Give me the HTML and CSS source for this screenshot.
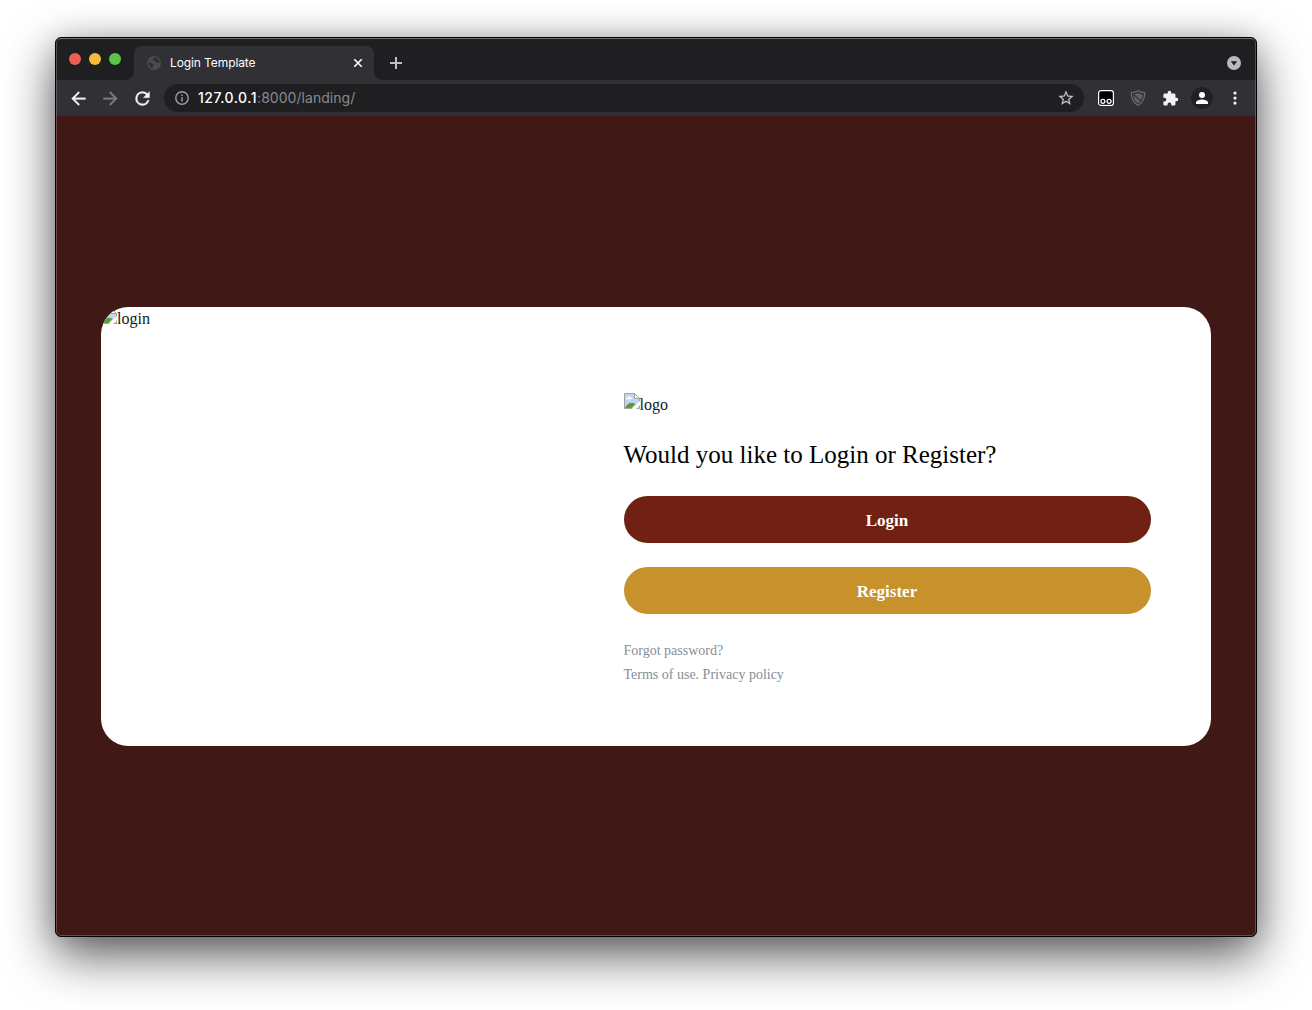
FILE: index.html
```html
<!DOCTYPE html>
<html lang="en">
<head>
<meta charset="utf-8">
<title>Login Template</title>
<link rel="stylesheet" href="styles.css">
</head>
<body>
<svg class="defs" width="0" height="0" aria-hidden="true">
  <symbol id="broken" viewBox="0 0 16 16">
    <path d="M.5.5h10l5 5v10H.5z" fill="#c3d5f7" stroke="#a3a3a3"/>
    <path d="M2 6.200c0-1.500 1.400-1.800 1.800-1.600.4-1.600 3-1.500 3.200 0 1.400 0 1.600 1.600.6 1.600z" fill="#fff"/>
    <path d="M1 15c1.500-4 5-6 8.500-5l2 1L7.500 15z" fill="#5c9e32"/>
    <path d="M10.500.5v5h5z" fill="#f3f3f3" stroke="#a3a3a3"/>
    <path d="M16 7.800 7.800 16h4.200L16 12z" fill="#fff"/>
  </symbol>
</svg>
<div class="window">
  <div class="tabstrip">
    <div class="lights"><i class="red"></i><i class="yellow"></i><i class="green"></i></div>
    <div class="tab">
      <svg class="globe" width="14" height="14" viewBox="0 0 14 14"><circle cx="7" cy="7" r="7" fill="#4a4b4e"/><path d="M1.300 6.200c2 .2 2.800.3 4 1.600 1.200.2 1.800.5 1.500 1.700-.8.600-1 1.500-1.200 2.800-2.600-.8-4.500-3.200-4.300-6.100zM8.800 1.600c-1.800.2-2.700.8-2.800 1.800.1 1.200 1.400.9 1.900 2 .3 1.100 1.500.8 2.200 1.200.8.6 1.500.4 2.500.1-.1-2.500-1.500-4.300-3.800-5.100z" fill="#303035"/></svg>
      <span class="tab-title">Login Template</span>
      <svg width="10" height="10" viewBox="0 0 10 10"><path d="m1.300 1.300 7.400 7.400m0-7.400L1.300 8.700" stroke="#fff" stroke-width="1.600"/></svg>
    </div>
    <svg class="plus" width="12" height="12" viewBox="0 0 12 12"><path d="M6 0v12M0 6h12" stroke="#bdc1c6" stroke-width="2"/></svg>
    <svg class="search-tabs" width="14" height="14" viewBox="0 0 14 14"><circle cx="7" cy="7" r="7" fill="#b7bac0"/><path d="M3.800 5.200h6.400L7 9.400z" fill="#202124"/></svg>
  </div>
  <div class="toolbar">
    <svg class="nav" viewBox="0 0 24 24"><path d="M20 11H7.830l5.590-5.590L12 4l-8 8 8 8 1.410-1.410L7.830 13H20z" fill="#f1f3f4" stroke="#f1f3f4" stroke-width=".3"/></svg>
    <svg class="nav" viewBox="0 0 24 24"><path d="m12 4-1.410 1.410L16.170 11H4v2h12.170l-5.580 5.590L12 20l8-8z" fill="#7c7d80" stroke="#7c7d80" stroke-width=".3"/></svg>
    <svg class="nav" viewBox="0 0 24 24"><path d="M17.650 6.350A7.950 7.950 0 0 0 12 4a8 8 0 1 0 7.730 10h-2.080A6 6 0 1 1 12 6c1.660 0 3.140.69 4.220 1.780L13 11h7V4z" fill="#f1f3f4" stroke="#f1f3f4" stroke-width=".4"/></svg>
    <div class="omnibox">
      <svg width="14" height="14" viewBox="0 0 14 14"><circle cx="7" cy="7" r="6.200" fill="none" stroke="#9aa0a6" stroke-width="1.400"/><path d="M7 6.200v4.200M7 3.500v1.500" stroke="#9aa0a6" stroke-width="1.500"/></svg>
      <span class="url"><b>127.0.0.1</b>:8000/landing/</span>
      <svg width="18" height="18" viewBox="0 0 24 24"><path d="m22 9.240-7.190-.62L12 2 9.190 8.630 2 9.240l5.460 4.730L5.820 21 12 17.270 18.180 21l-1.630-7.030zM12 15.400l-3.760 2.270 1-4.280-3.320-2.880 4.380-.38L12 6.100l1.710 4.040 4.380.38-3.320 2.880 1 4.280z" fill="#bdc1c6" stroke="#bdc1c6" stroke-width=".2"/></svg>
    </div>
    <div class="extensions">
      <svg width="16" height="16" viewBox="0 0 16 16"><rect x=".6" y=".6" width="14.800" height="14.800" rx="2.500" fill="#000" stroke="#fff" stroke-width="1.200"/><g fill="none" stroke="#fff" stroke-width="1.300"><circle cx="4.900" cy="11.300" r="2"/><circle cx="11.100" cy="11.300" r="2"/></g></svg>
      <svg width="16" height="16" viewBox="0 0 16 16"><path d="M8 .8c2.200 1.300 4.200 1.800 6.700 1.900 0 6-1.700 10-6.700 12.600C3 12.700 1.300 8.700 1.300 2.700 3.800 2.600 5.800 2.100 8 .8z" fill="#303035" stroke="#6c6d70" stroke-width="1.200"/><path d="M8 3c1.500.8 3 1.200 4.600 1.400-.1 4.200-1.400 7-4.600 9-3.200-2-4.500-4.800-4.600-9C5 4.200 6.500 3.800 8 3z" fill="#646568"/><path d="m3.600 4.800 8 6.500" stroke="#303035" stroke-width="1.200"/></svg>
      <svg width="17" height="17" viewBox="0 0 24 24"><path d="M20.500 11H19V7a2 2 0 0 0-2-2h-4V3.500a2.500 2.500 0 0 0-5 0V5H4a2 2 0 0 0-1.990 2v3.800H3.500a2.700 2.700 0 0 1 0 5.400H2V20a2 2 0 0 0 2 2h3.800v-1.500a2.700 2.700 0 0 1 5.400 0V22H17a2 2 0 0 0 2-2v-4h1.500a2.500 2.500 0 0 0 0-5z" fill="#f1f3f4"/></svg>
      <svg width="22" height="22" viewBox="0 0 22 22"><circle cx="11" cy="11" r="11" fill="#202124"/><circle cx="11" cy="8" r="3" fill="#fff"/><path d="M5 17v-1.500c0-2 4-3 6-3s6 1 6 3V17z" fill="#fff"/></svg>
      <svg width="4" height="14" viewBox="0 0 4 14"><g fill="#f1f3f4"><circle cx="2" cy="2.100" r="1.600"/><circle cx="2" cy="7.100" r="1.600"/><circle cx="2" cy="12.100" r="1.600"/></g></svg>
    </div>
  </div>
  <main class="page">
    <section class="card">
      <div class="picture"><svg width="16" height="16"><use href="#broken"/></svg><span>login</span></div>
      <div class="panel">
        <div class="logo"><svg width="16" height="16"><use href="#broken"/></svg><span>logo</span></div>
        <p class="question">Would you like to Login or Register?</p>
        <a class="btn login">Login</a>
        <a class="btn register">Register</a>
        <div class="links"><a>Forgot password?</a><a>Terms of use. Privacy policy</a></div>
      </div>
    </section>
  </main>
</div>
</body>
</html>
```
FILE: styles.css
```css
* { box-sizing: border-box; }
body {
  margin: 0;
  height: 1010px;
  padding: 37px 55px 73px;
  overflow: hidden;
  background: #fff;
  font-family: "Liberation Serif", "Times New Roman", serif;
}
svg { display: block; flex: none; }
.defs { position: absolute; }
.window {
  position: relative;
  height: 900px;
  border: 1px solid #000;
  border-radius: 6px;
  overflow: hidden;
  background: #401917;
  box-shadow: 0 18px 50px rgba(0, 0, 0, .66), 0 0 24px rgba(0, 0, 0, .12);
}
/* thin highlight along the inside edge of the window */
.window::after {
  content: "";
  position: absolute;
  inset: 0;
  border: 1px solid rgba(255, 255, 255, .22);
  border-top-color: rgba(255, 255, 255, .38);
  border-radius: 5px;
}
.tabstrip {
  display: flex;
  height: 42px;
  padding: 8px 15px 0 13px;
  background: #1f1f21;
  font-family: Inter, sans-serif;
}
.lights { display: flex; gap: 8px; padding-top: 7px; }
.lights i { width: 12px; height: 12px; border-radius: 50%; }
.red { background: #ec5f51; }
.yellow { background: #f4bb40; }
.green { background: #5dc446; }
.tab {
  position: relative;
  display: flex;
  align-items: center;
  width: 240px;
  height: 34px;
  margin-left: 13px;
  padding: 0 11px 0 13px;
  border-radius: 8px 8px 0 0;
  background: #303035;
  color: #fff;
  font-size: 12px;
}
.tab::before, .tab::after {
  content: "";
  position: absolute;
  bottom: 0;
  width: 8px;
  height: 8px;
}
.tab::before { left: -8px; background: radial-gradient(circle at 0 0, transparent 7.500px, #303035 8px); }
.tab::after { right: -8px; background: radial-gradient(circle at 100% 0, transparent 7.500px, #303035 8px); }
.tab-title { flex: 1; margin-left: 9px; padding-bottom: 2px; letter-spacing: -.1px; }
.plus { margin: 11px 0 0 16px; }
.search-tabs { margin: 10px 0 0 auto; }
.toolbar {
  display: flex;
  align-items: center;
  height: 36px;
  padding: 0 19.500px 0 11.500px;
  background: #303035;
}
.nav { width: 21px; height: 21px; margin-right: 11px; }
.omnibox {
  display: flex;
  align-items: center;
  flex: 1;
  height: 28px;
  margin-left: .5px;
  padding: 0 9px 0 11px;
  border-radius: 14px;
  background: #1f1f21;
  color: #89898c;
  font: 14px/28px Inter, sans-serif;
}
.url { flex: 1; margin-left: 9px; letter-spacing: .04px; }
.url b { color: #fff; font-weight: 500; letter-spacing: .5px; }
.extensions { display: flex; align-items: center; margin-left: 14px; }
.extensions svg:nth-child(2) { margin-left: 16px; }
.extensions svg:nth-child(3) { margin-left: 15.500px; }
.extensions svg:nth-child(4) { margin-left: 12.500px; }
.extensions svg:nth-child(5) { margin-left: 19.500px; }
.page {
  display: flex;
  align-items: center;
  height: 820px;
  padding: 1px 45px 0;
}
.card {
  display: flex;
  width: 1110px;
  height: 439px;
  border-radius: 27.500px;
  overflow: hidden;
  background: #fff;
}
.picture, .logo { display: flex; color: #111820; font-size: 16px; line-height: 24px; }
.picture { width: 463px; }
.picture svg { margin-top: 1px; }
.panel { flex: 1; padding: 86px 60px 0; }
.logo span { margin-left: -.5px; }
.question { margin: 21px 0 25px -.5px; color: #000; font-size: 25px; line-height: 33px; }
.btn {
  display: block;
  height: 47px;
  margin-bottom: 24px;
  padding-right: 1px;
  border-radius: 24px;
  color: #fff;
  font-size: 17px;
  font-weight: bold;
  line-height: 49px;
  text-align: center;
}
.login { background: #712014; }
.register { background: #c7912b; }
.links { margin-left: -.5px; padding-top: 1px; color: #868e98; font-size: 14px; line-height: 24px; }
.links a { display: block; }
```
